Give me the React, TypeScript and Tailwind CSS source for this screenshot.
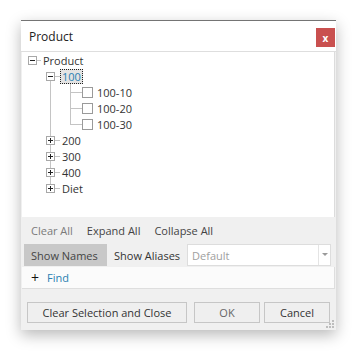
import React from "react";

const LINE = "#c4c4c4";

// tree expander cell: small box with +/- and guide lines
function Expander({
  open,
  up,
  down,
  w,
  bx,
}: {
  open: boolean;
  up?: boolean;
  down?: boolean;
  w: number;
  bx: number;
}) {
  const cx = bx + 4.5;
  return (
    <svg width={w} height={16} className="shrink-0">
      {up && <line x1={cx} y1={0} x2={cx} y2={4} stroke={LINE} />}
      {down && <line x1={cx} y1={13} x2={cx} y2={16} stroke={LINE} />}
      <line x1={bx + 9} y1={8.5} x2={w} y2={8.5} stroke={LINE} />
      <rect x={bx + 0.5} y={4.5} width={8} height={8} fill="#fff" stroke="#a8a8a8" />
      <line x1={bx + 2} y1={8.5} x2={bx + 7} y2={8.5} stroke="#222" />
      {!open && <line x1={cx} y1={6} x2={cx} y2={11} stroke="#222" />}
    </svg>
  );
}

function VLine({ w }: { w: number }) {
  return (
    <svg width={w} height={16} className="shrink-0">
      <line x1={9.5} y1={0} x2={9.5} y2={16} stroke={LINE} />
    </svg>
  );
}

function Elbow({ last }: { last?: boolean }) {
  return (
    <svg width={22} height={16} className="shrink-0">
      <line x1={10.5} y1={0} x2={10.5} y2={last ? 9 : 16} stroke={LINE} />
      <line x1={10.5} y1={8.5} x2={22} y2={8.5} stroke={LINE} />
    </svg>
  );
}

function Leaf({ label, last }: { label: string; last?: boolean }) {
  return (
    <div className="flex h-4 items-center">
      <div className="w-[19px] shrink-0" />
      <VLine w={19} />
      <Elbow last={last} />
      <span className="w-[11px] h-[11px] border border-[#9a9a9a] bg-white shrink-0" />
      <span className="ml-[4px] text-[#333]">{label}</span>
    </div>
  );
}

function Branch({ label, last }: { label: string; last?: boolean }) {
  return (
    <div className="flex h-4 items-center">
      <div className="w-[19px] shrink-0" />
      <Expander open={false} up down={!last} w={19} bx={5} />
      <span className="ml-[2px] text-[#333]">{label}</span>
    </div>
  );
}

function Btn({ children, className }: { children: React.ReactNode; className?: string }) {
  return (
    <div
      className={
        "h-[21px] flex items-center justify-center border border-[#c6c6c6] bg-[#efefef] " +
        (className ?? "")
      }
    >
      {children}
    </div>
  );
}

export default function App() {
  return (
    <div
      className="w-[356px] h-[352px] bg-white pt-[20px] pl-[21px] text-[11px] leading-none"
      style={{ fontFamily: '"Open Sans", "Noto Sans", sans-serif' }}
    >
      <div className="w-[315px] h-[310px] bg-[#f0f0f0] border-t border-[#747474] shadow-[0_5px_14px_rgba(0,0,0,0.28)] flex flex-col">
        {/* title bar */}
        <div className="h-[31px] shrink-0 bg-white border-b border-[#dedede] flex justify-between">
          <span className="pl-[8px] pt-[10px] text-[12px] text-[#222]">Product</span>
          <div className="mt-[7px] mr-[1px] w-[19px] h-[19px] bg-[#c9504f] text-white font-bold text-[10px] flex items-center justify-center">
            x
          </div>
        </div>

        {/* tree */}
        <div className="h-[165px] shrink-0 mx-px bg-white border-r border-[#dcdcdc]">
          <div className="flex h-4 items-center">
            <Expander open w={19} bx={6} />
            <span className="ml-[2px] text-[#333]">Product</span>
          </div>
          <div className="flex h-4 items-center">
            <div className="w-[19px] shrink-0" />
            <Expander open down w={19} bx={5} />
            <span className="h-[15px] px-[1px] flex items-center border border-dotted border-[#222] bg-[#e3e3e3] text-[#2a7fb2]">
              100
            </span>
          </div>
          <Leaf label="100-10" />
          <Leaf label="100-20" />
          <Leaf label="100-30" last />
          <Branch label="200" />
          <Branch label="300" />
          <Branch label="400" />
          <Branch label="Diet" last />
        </div>

        {/* toolbar */}
        <div className="h-[27px] shrink-0 flex items-center pl-[3px]">
          <span className="px-[7px] text-[#7a7a7a]">Clear All</span>
          <span className="px-[7px] text-[#444]">Expand All</span>
          <span className="px-[7px] text-[#444]">Collapse All</span>
        </div>
        <div className="h-[22px] shrink-0 flex items-stretch pl-[3px]">
          <span className="w-[83px] bg-[#c8c8c8] text-[#444] flex items-center pl-[7px]">
            Show Names
          </span>
          <span className="px-[7px] text-[#333] flex items-center">Show Aliases</span>
          <div className="w-[144px] bg-white border border-[#dddddd] flex items-center">
            <span className="flex-1 pl-[4px] text-[#a0a0a0]">Default</span>
            <div className="w-[12px] h-full border-l border-[#e4e4e4] flex items-center justify-center">
              <svg width={6} height={4}>
                <polygon points="0,0 6,0 3,3" fill="#9a9a9a" />
              </svg>
            </div>
          </div>
        </div>
        <div className="mt-px h-[22px] shrink-0 mx-px bg-[#fbfbfb] border-b border-r border-[#dedede] flex items-center">
          <span className="pl-[9px] text-[14px] text-[#111] leading-none">+</span>
          <span className="ml-[8px] text-[#2a7fb2]">Find</span>
        </div>

        {/* footer */}
        <div className="flex-1 relative flex items-start pt-[13px] pl-[6px]">
          <Btn className="w-[160px] text-[#333]">Clear Selection and Close</Btn>
          <Btn className="ml-[7px] w-[66px] text-[#666]">OK</Btn>
          <Btn className="ml-[4px] w-[66px] text-[#333]">Cancel</Btn>
          <svg width={8} height={8} className="absolute right-[2px] bottom-[2px]">
            <rect x={6} y={0} width={2} height={2} fill="#bdbdbd" />
            <rect x={3} y={3} width={2} height={2} fill="#bdbdbd" />
            <rect x={6} y={3} width={2} height={2} fill="#bdbdbd" />
            <rect x={0} y={6} width={2} height={2} fill="#bdbdbd" />
            <rect x={3} y={6} width={2} height={2} fill="#bdbdbd" />
            <rect x={6} y={6} width={2} height={2} fill="#bdbdbd" />
          </svg>
        </div>
      </div>
    </div>
  );
}
